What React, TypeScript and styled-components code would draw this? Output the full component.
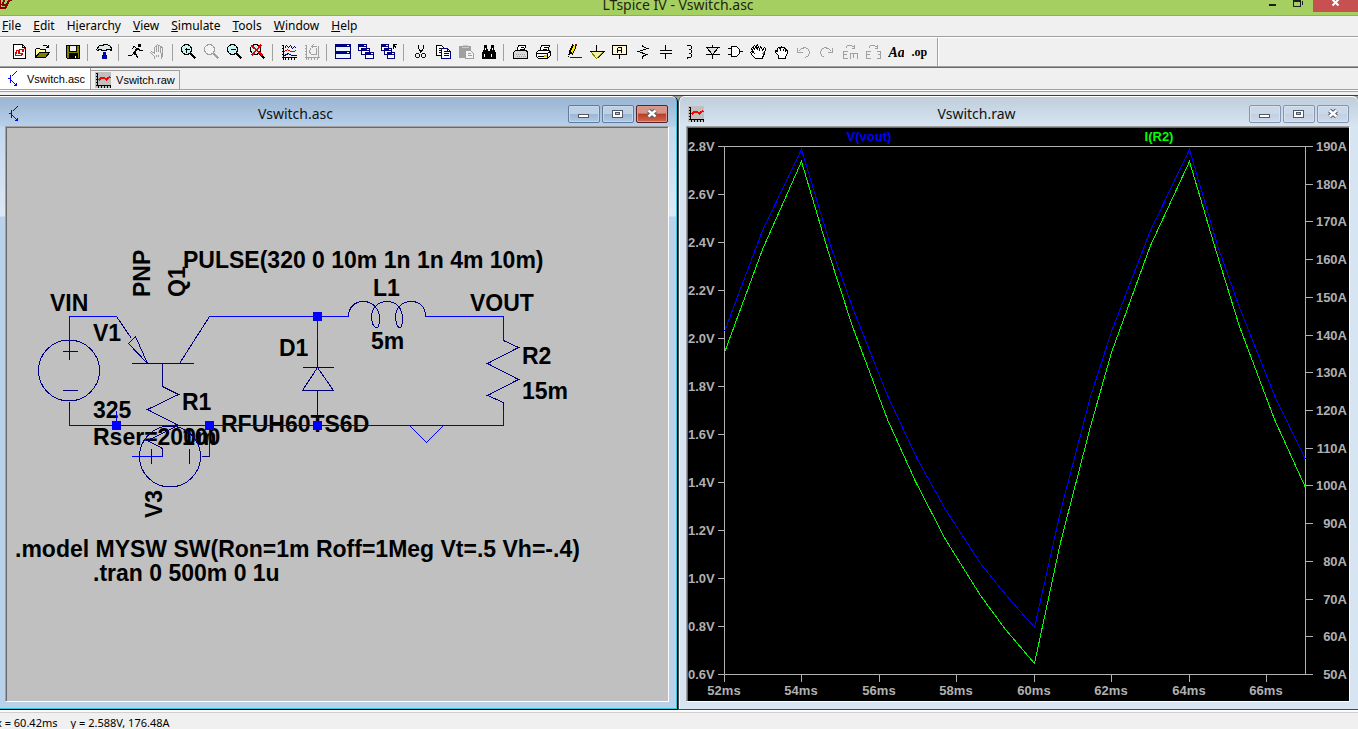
import React from "react";
import styled, { createGlobalStyle } from "styled-components";

const GlobalStyle = createGlobalStyle`
  * { box-sizing: border-box; }
  body { margin: 0; background: #f0f0f0; color: #000; font-family: "Open Sans", "Noto Sans", sans-serif; font-size: 12px; }
  button { font: inherit; color: inherit; padding: 0; margin: 0; }
`;

const uiFont = `"Noto Sans", "Open Sans", sans-serif`;

const Frame = styled.div`
  display: flex;
  flex-direction: column;
  height: 100vh;
  overflow: hidden;
`;

const TitleBar = styled.header`
  display: flex;
  align-items: flex-end;
  height: 16px;
  flex: none;
  overflow: hidden;
  background: #a6cf62;
  border-bottom: 1px solid #8db44c;
`;

const AppTitle = styled.h1`
  flex: 1;
  margin: 0 0 0 84px;
  text-align: center;
  font: 400 14px/20px ${uiFont};
  color: #1e2410;
`;

const FrameButtons = styled.div`
  display: flex;
  align-self: flex-start;
`;

const FrameButton = styled.button<{ $close?: boolean; $wide?: number }>`
  display: flex;
  width: ${(p) => p.$wide ?? 27}px;
  height: ${(p) => (p.$close ? 12 : 15)}px;
  border: 0;
  background: ${(p) => (p.$close ? "#c75050" : "transparent")};
`;

const MenuBar = styled.nav`
  display: flex;
  gap: 12px;
  height: 20px;
  padding-left: 2px;
  flex: none;
`;

const MenuItem = styled.button`
  border: 0;
  background: none;
  font: 400 12px/20px ${uiFont};
  white-space: nowrap;
`;

const ToolArea = styled.div`
  display: flex;
  flex: none;
  height: 32px;
  border-top: 1px solid #a0a0a0;
  border-bottom: 1px solid #696969;
  box-shadow: inset 0 1px #fff, inset 0 -1px #a0a0a0;
`;

const ToolBar = styled.div`
  display: flex;
  align-items: center;
  height: 28px;
  margin-top: 1px;
  padding: 0 7px;
  border-right: 1px solid #a0a0a0;
  box-shadow: 1px 0 #fff;
`;

const ToolButton = styled.button`
  display: flex;
  align-items: center;
  justify-content: center;
  width: 23px;
  height: 22px;
  border: 0;
  background: none;
`;

const Divider = styled.span`
  width: 8px;
  height: 17px;
  background: linear-gradient(#a0a0a0, #a0a0a0) 3px 0 / 1px 100% no-repeat;
`;

const TabStrip = styled.div`
  display: flex;
  align-items: flex-end;
  height: 22px;
  flex: none;
  border-bottom: 1px solid #a0a0a0;
`;

const Tab = styled.button<{ $active?: boolean }>`
  display: flex;
  align-items: center;
  gap: 5px;
  height: ${(p) => (p.$active ? 21 : 19)}px;
  padding: ${(p) => (p.$active ? "0 5px 0 6px" : "0 4px 0 4px")};
  border: 1px solid #a0a0a0;
  border-width: ${(p) => (p.$active ? "0 1px 0 0" : "1px 1px 0 0")};
  background: ${(p) => (p.$active ? "#fff" : "#f0f0f0")};
  font: 400 11px/18px "Liberation Sans", Arial, sans-serif;
`;

const TabShelf = styled.div`
  height: 5px;
  flex: none;
  background: linear-gradient(#fff 0 1px, #a0a0a0 1px 2px, #f0f0f0 2px);
`;

const Workspace = styled.main`
  display: grid;
  grid-template-columns: 339fr 340fr;
  flex: 1;
  min-height: 0;
  border-top: 1px solid #3c3c3c;
  background: #a0a0a0;
`;

const Child = styled.section<{ $active?: boolean }>`
  display: flex;
  flex-direction: column;
  min-width: 0;
  min-height: 0;
  padding: 1px 8px 7px ${(p) => (p.$active ? 5 : 7)}px;
  border: solid ${(p) => (p.$active ? "#000" : "#4a4a50")};
  border-width: ${(p) => (p.$active ? "0 1px 1px 0" : "0 0 1px 1px")};
  border-radius: ${(p) => (p.$active ? "0 6px 0 0" : "6px 6px 0 0")};
  box-shadow: inset ${(p) => (p.$active ? "-1px -1px #35c8dc" : "1px 0 #f4f8fc")}, inset 0 1px #fff;
  background: ${(p) =>
    p.$active
      ? "linear-gradient(#99b4d1 0, #b7cfe9 30px, #c3d8ee 31px, #dce8f5 120px, #b9d1ea 121px)"
      : "linear-gradient(#bfcddb 0, #d7e4f2 30px)"};
`;

const ChildTitle = styled.header`
  display: flex;
  align-items: center;
  height: 29px;
  padding: 4px 1px 0 2px;
  flex: none;
`;

const ChildName = styled.h2`
  flex: 1;
  margin: 0;
  text-align: center;
  font: 400 14px/20px ${uiFont};
  color: #111;
`;

const ChildButtons = styled.div`
  display: flex;
  gap: 2px;
`;

const ChildButton = styled.button<{ $tone: "blue" | "red" | "pale" }>`
  display: flex;
  width: 32px;
  height: 18px;
  border: 1px solid ${(p) => ({ blue: "#5f7ba0", red: "#5a2024", pale: "#8494b2" })[p.$tone]};
  border-radius: 2px;
  box-shadow: inset 0 0 0 1px ${(p) => ({ blue: "#c6d8ec", red: "#dc9a8e", pale: "#d6e2f0" })[p.$tone]};
  background: ${(p) =>
    ({
      blue: "linear-gradient(#bdd0e6 50%, #9ab6d4 50%, #b2cbe4)",
      red: "linear-gradient(#d69488 45%, #b83c26 50%, #cc6a50)",
      pale: "linear-gradient(#cbd8e7 50%, #c1cfe0 50%, #ccdaea)",
    })[p.$tone]};
`;

const Client = styled.div<{ $dark?: boolean }>`
  flex: 1;
  min-height: 0;
  overflow: hidden;
  border: 1px solid;
  border-color: #a0a0a0 #fff #fff #a0a0a0;
  box-shadow: inset 1px 1px #696969;
  padding: 1px 0 0 1px;
  background: ${(p) => (p.$dark ? "#000" : "#c0c0c0")};
`;

const Drawing = styled.svg`
  display: block;
  width: 100%;
  height: auto;
`;

const StatusBar = styled.footer`
  display: flex;
  gap: 13px;
  height: 19px;
  flex: none;
  margin-left: -4px;
  padding-top: 2px;
  border-top: 2px solid #fafafa;
  box-shadow: inset 0 1px #cfcfcf;
  font: 400 11px/18px ${uiFont};
  white-space: pre;
`;

const Glyph = styled.svg`
  display: block;
  flex: none;
`;

function Icon({ children, w = 16, h = 16 }: { children: React.ReactNode; w?: number; h?: number }) {
  return (
    <Glyph width={w} height={h} viewBox={`0 0 ${w} ${h}`} fill="none" stroke="#000" shapeRendering="crispEdges" aria-hidden>
      <g transform="translate(.5 .5)">{children}</g>
    </Glyph>
  );
}

const GREY = "#a0a0a0";
const NAVY = "#000080";

const lens = (c: string, fill: string) => (
  <>
    <circle cx="5" cy="5" r="5" stroke={c} fill={fill} />
    <path d="M9 9L14 14" stroke={c} strokeWidth="2.4" />
  </>
);

const miniWindow = (x: number, y: number, w = 8, h = 7) => (
  <>
    <rect x={x} y={y} width={w} height={h} fill="#fff" stroke={NAVY} />
    <path d={`M${x} ${y + 1}H${x + w}M${x} ${y + 2}H${x + w}`} stroke={NAVY} />
    <path d={`M${x + w - 3} ${y + 1}H${x + w - 1}`} stroke="#fff" />
  </>
);

const axes = (c: string) => (
  <path d="M2 0V15M0 1H2M0 4H2M0 7H2M0 10H2M0 13H15M4 13V15M7 13V15M10 13V15M13 13V15" stroke={c} />
);

const icons: Record<string, React.ReactNode> = {
  New: (
    <>
      <path d="M2 0H11L14 3V14H2Z" fill="#fff" />
      <path d="M11 0V3H14" />
      <path d="M5 6H8L7 9H11L10 11H4ZM7 5H12L11 8M12 5L13 4M4 11L3 12" stroke="#e00000" strokeWidth="1.4" />
    </>
  ),
  Open: (
    <>
      <path d="M1 12V5L2 4H5L6 5H11V8" fill="#ffff9c" />
      <path d="M1 13L5 8H15L11 13Z" fill="#808000" />
      <path d="M8 2L9 1H12L14 3M14 0V3H11" />
    </>
  ),
  Save: (
    <>
      <path d="M1 1H14V14H2L1 13Z" fill="#808000" />
      <rect x="4" y="1" width="7" height="6" fill="#f0f0f0" />
      <rect x="4" y="9" width="8" height="5" fill="#000" />
      <path d="M10 11V13" stroke="#fff" />
    </>
  ),
  "Control Panel": (
    <>
      <path d="M0 5L3 1H6L8 0H11L14 2L15 4V6L13 5H10V6H5V5H3L1 6Z" fill="#dce8e8" />
      <path d="M7 7V14M8 7V14M9 7V14" stroke="#0000c8" />
      <path d="M6 10V14M10 10V14" stroke={NAVY} />
    </>
  ),
  Run: (
    <>
      <rect x="11" y="0" width="2" height="2" fill="#000" />
      <path d="M5 2H7L9 4M9 4L6 9M10 4L7 9M6 9L9 10L10 14M6 9L4 11H0M11 4L12 6H15M6 3L4 5" strokeWidth="1.3" />
    </>
  ),
  Halt: (
    <path d="M4 14V12L0 8L1 7L4 9V3L5 2L6 3V7M6 3V1L7 0L8 1V7M8 2L9 1L10 2V7M10 3L11 2L12 4V11L11 14ZM6 10V12M8 10V12" stroke={GREY} />
  ),
  "Zoom area": (
    <>
      {lens("#000", "#c8f4f4")}
      <path d="M3 5H8M5 3V8" />
    </>
  ),
  Pan: lens(GREY, "#f4f4f4"),
  "Zoom back": (
    <>
      {lens("#000", "#c8f4f4")}
      <path d="M3 5H8" />
    </>
  ),
  "Zoom full": (
    <>
      {lens("#000", "#c8f4f4")}
      <path d="M1 1L12 11M11 0L1 11" stroke="#e80000" strokeWidth="1.8" />
    </>
  ),
  "Pick visible traces": (
    <>
      {axes("#000")}
      <path d="M3 4L5 1L7 3L9 1L11 4L13 2L15 4" stroke={NAVY} />
      <path d="M3 7L6 5L9 7H12L15 6" stroke="#e00000" />
      <path d="M3 11L7 9L10 11H15" stroke={NAVY} />
    </>
  ),
  "Autorange": (
    <>
      {axes(GREY)}
      <path d="M7 2H12M6 4L5 7L6 9L7 10H12M9 0L7 2L9 4M14 1V12M12 3V10" stroke={GREY} />
    </>
  ),
  "Tile windows": (
    <>
      <rect x="0" y="0" width="15" height="7" fill="#e8f4ff" stroke={NAVY} />
      <rect x="0" y="7" width="15" height="7" fill="#e8f4ff" stroke={NAVY} />
      <path d="M0 1H15M0 2H15M0 8H15M0 9H15" stroke={NAVY} />
      <path d="M11 1H13M11 8H13" stroke="#fff" />
    </>
  ),
  "Cascade windows": (
    <>
      {miniWindow(0, 0, 8, 6)}
      {miniWindow(3, 4, 8, 6)}
      {miniWindow(7, 8, 8, 6)}
    </>
  ),
  "Close all": (
    <>
      {miniWindow(0, 0, 7, 6)}
      {miniWindow(3, 4, 7, 6)}
      {miniWindow(6, 8, 7, 6)}
      <path d="M12 0H15M12 0V4M12 0L15 4" />
    </>
  ),
  Cut: (
    <>
      <path d="M6 0V4L9 9M11 0V4L7 9M8 5V7" />
      <circle cx="5" cy="11" r="2" stroke={NAVY} />
      <circle cx="11" cy="11" r="2" stroke={NAVY} />
    </>
  ),
  Copy: (
    <>
      <path d="M1 1H6L9 4V11H1Z" fill="#fff" />
      <path d="M3 4H5M3 6H7M3 8H7" />
      <path d="M6 4H12L15 7V14H6Z" fill="#fff" stroke={NAVY} />
      <path d="M8 7H11M8 9H13M8 11H13M12 4V7H15" stroke={NAVY} />
    </>
  ),
  Paste: (
    <>
      <path d="M1 2H12V13H1Z" fill={GREY} stroke={GREY} />
      <path d="M4 1H9M3 3H10" stroke="#c8c8c8" />
      <path d="M7 6H12L15 9V14H7Z" fill="#f4f4f4" stroke={GREY} />
      <path d="M9 9H12M9 11H13" stroke={GREY} />
    </>
  ),
  Find: (
    <>
      <path d="M3 1H5V4L7 7V14H1V9L3 4ZM10 1H12V4L14 9V14H8V7L10 4Z" fill="#000" />
      <path d="M3 9V12M10 9V12M4 3V5M11 3V5" stroke="#fff" />
    </>
  ),
  "Print setup": (
    <>
      <path d="M4 7L6 1H13L12 7" fill="#fff" />
      <path d="M8 3H11M7 5H11" />
      <path d="M1 8L3 6H14L15 8V14H1Z" fill="#d8d8d8" />
      <path d="M3 10H13M4 12H13" stroke={GREY} strokeDasharray="1 1" />
    </>
  ),
  Print: (
    <>
      <path d="M4 7L6 1H14L12 7" fill="#fff" />
      <path d="M8 3H12M7 5H11" />
      <path d="M1 8L3 6H14L15 8V11L12 14H3L1 12Z" fill="#fff" />
      <path d="M1 9H12L15 7M2 12H12M12 9V14" />
      <path d="M8 11H11" stroke="#d8c800" strokeWidth="2" />
    </>
  ),
  Wire: (
    <>
      <path d="M8 1L4 9" stroke="#000" strokeWidth="4.5" />
      <path d="M8 2L5 8" stroke="#ffe800" strokeWidth="2" />
      <path d="M8 0H10" stroke="#a00000" strokeWidth="2" />
      <path d="M2 11L3 9M1 12H2" />
      <path d="M3 13H15" stroke="#0000ff" />
    </>
  ),
  Ground: (
    <>
      <path d="M7 0V7" />
      <path d="M1 7H14L7 14Z" fill="#f4f4a0" stroke="#808000" />
      <path d="M0 7H15L8 14" />
    </>
  ),
  "Label net": (
    <>
      <rect x="0" y="1" width="14" height="9" rx="1" fill="#fff8d0" />
      <path d="M7 10V14M5 8V4L6 3H9V8M5 6H9" />
    </>
  ),
  Resistor: <path d="M7 0V2L12 4L3 7L11 10L7 12V14" />,
  Capacitor: <path d="M7 0V6M1 6H13M1 9H13M7 9V14" />,
  Inductor: <path d="M6 0V1H9L10 2V4L9 5H7M9 5L10 6V8L9 9H7M9 9L10 10V12L9 13H6V14" />,
  Diode: (
    <>
      <path d="M8 0V3M2 3H14L8 10ZM1 10H15M8 10V14" fill="#e0e0e0" />
      <path d="M1 3H15" />
    </>
  ),
  Component: (
    <>
      <path d="M4 2H9L12 5V9L9 12H4Z" fill="#fff" />
      <path d="M0 4H4M0 10H4M12 7H15" />
    </>
  ),
  Move: (
    <>
      <path d="M5 14L2 11L0 8L1 7L3 8L1 4L2 3L4 5L3 2L4 1L7 5L6 1L7 0L9 5L10 2L11 3L12 6L14 3L15 4L14 9L12 13V14Z" fill="#fff" />
      <path d="M13 8L12 10" stroke="#00b0b0" />
    </>
  ),
  Drag: <path d="M5 14V11L2 8V6L4 7V4L5 3L7 4L8 2L9 3L10 3L12 4V5L14 6V9L12 12V14ZM7 4V6M10 4V6M12 5V7" fill="#fff" />,
  Undo: <path d="M1 3V8H6M2 7L5 4L9 3L12 5L13 8L12 11L9 13" stroke={GREY} />,
  Redo: <path d="M13 3V8H8M12 7L9 4L5 3L2 5L1 8L2 11L5 13" stroke={GREY} />,
  Rotate: (
    <>
      <path d="M5 7H1V14H5M1 10H4M8 14V9H15V14M11 9V13" stroke={GREY} />
      <path d="M3 4L5 1H9L12 3M12 0V4H9" stroke={GREY} />
    </>
  ),
  Mirror: (
    <>
      <path d="M5 7H1V14H5M1 10H4M11 7H15V14H11M15 10H12" stroke={GREY} />
      <path d="M3 4L5 1H9L12 3M12 0V4H9" stroke={GREY} />
    </>
  ),
  Text: (
    <text x="0" y="12" fill="#000" stroke="none" fontFamily="Liberation Serif, serif" fontSize="14" fontWeight="700" fontStyle="italic">
      Aa
    </text>
  ),
  "SPICE directive": (
    <text x="0" y="11" fill="#000" stroke="none" fontFamily="Liberation Serif, serif" fontSize="12" fontWeight="700">
      .op
    </text>
  ),
};

const toolGroups = [
  ["New", "Open"],
  ["Save"],
  ["Control Panel"],
  ["Run", "Halt"],
  ["Zoom area", "Pan", "Zoom back", "Zoom full"],
  ["Pick visible traces", "Autorange"],
  ["Tile windows", "Cascade windows", "Close all"],
  ["Cut", "Copy", "Paste", "Find"],
  ["Print setup", "Print"],
  [
    "Wire", "Ground", "Label net", "Resistor", "Capacitor", "Inductor", "Diode", "Component",
    "Move", "Drag", "Undo", "Redo", "Rotate", "Mirror", "Text", "SPICE directive",
  ],
];

const menus: [string, string, string][] = [
  ["", "F", "ile"],
  ["", "E", "dit"],
  ["H", "i", "erarchy"],
  ["", "V", "iew"],
  ["", "S", "imulate"],
  ["", "T", "ools"],
  ["", "W", "indow"],
  ["", "H", "elp"],
];

const SchematicIcon = () => (
  <Icon>
    <path d="M1 7H4M4 3V11M5 5L10 0M5 9L10 14M10 11V14H7M8 13H10M9 12V13" stroke="#0000ff" />
  </Icon>
);

const WaveIcon = () => (
  <Icon>
    <rect x="0" y="0" width="15" height="15" fill="#c0c0c0" stroke="#c0c0c0" />
    <path d="M2 0V13M0 1H2M0 4H2M0 7H2M0 10H2M0 13H15M3 13V15M6 13V15M9 13V15M12 13V15M15 13V15" />
    <path d="M3 8L6 5L8 5L11 7L15 4" stroke="#ff0000" strokeWidth="2" />
  </Icon>
);

function CaptionButtons({ active }: { active?: boolean }) {
  const tone = active ? "blue" : "pale";
  return (
    <ChildButtons>
      <ChildButton $tone={tone} aria-label="Minimize">
        <Icon w={30} h={16}>
          <rect x="9" y="8" width="10" height="3" rx="1" fill="#fff" stroke="#535666" />
        </Icon>
      </ChildButton>
      <ChildButton $tone={tone} aria-label="Maximize">
        <Icon w={30} h={16}>
          <rect x="9" y="4" width="10" height="7" fill="#fff" stroke="#535666" />
          <rect x="12" y="6" width="4" height="2" fill="#a8c0dc" stroke="#535666" />
        </Icon>
      </ChildButton>
      <ChildButton $tone={active ? "red" : "pale"} aria-label="Close">
        <Icon w={30} h={16}>
          <g shapeRendering="auto">
            <path d="M11 4L18 10M18 4L11 10" stroke="#535666" strokeWidth="4.4" />
            <path d="M11 4L18 10M18 4L11 10" stroke="#fff" strokeWidth="2.4" />
          </g>
        </Icon>
      </ChildButton>
    </ChildButtons>
  );
}

const SchematicText = styled.text`
  font: 700 23px "Liberation Sans", Arial, sans-serif;
  fill: #000;
  stroke: none;
`;

const labels: [number, number, string][] = [
  [183, 268, "PULSE(320 0 10m 1n 1n 4m 10m)"],
  [50, 311, "VIN"],
  [93, 341, "V1"],
  [93, 418, "325"],
  [93, 445, "Rser=200m"],
  [182, 445, "100"],
  [182, 410, "R1"],
  [279, 356, "D1"],
  [373, 296, "L1"],
  [371, 349, "5m"],
  [470, 311, "VOUT"],
  [522, 364, "R2"],
  [522, 399, "15m"],
  [221, 432, "RFUH60TS6D"],
  [15, 557, ".model MYSW SW(Ron=1m Roff=1Meg Vt=.5 Vh=-.4)"],
  [93, 581, ".tran 0 500m 0 1u"],
];

const uprightLabels: [number, number, string][] = [
  [150, 297, "PNP"],
  [185, 297, "Q1"],
  [162, 518, "V3"],
];

const junctions: [number, number][] = [[317, 316], [317, 425], [116, 425], [209, 425]];

function Schematic() {
  return (
    <Drawing viewBox="7 128 661 572" fill="none" shapeRendering="crispEdges" role="img" aria-label="Schematic">
      {labels.map(([x, y, t]) => (
        <SchematicText key={t} x={x} y={y}>{t}</SchematicText>
      ))}
      {uprightLabels.map(([x, y, t]) => (
        <SchematicText key={t} transform={`translate(${x} ${y}) rotate(-90)`}>{t}</SchematicText>
      ))}
      <g transform="translate(.5 .5)">
        <g stroke={NAVY}>
          <circle cx="68.5" cy="370" r="30.5" />
          <path d="M62 351H77M69 323V359M62 390H77M69 401V409" />
          <path d="M116 316L131 338M135 336L128 343L147 363ZM131 363H193M209 316L179 363" />
          <path d="M162 363V386L178 394L147 409L178 425L147 440L162 448V456" />
          <circle cx="169.5" cy="456" r="30.5" />
          <path d="M151 448V463M144 456H159M189 448V463M201 456H209" />
          <path d="M317 340V367M302 367H333M317 367L302 390H333ZM317 390V418" />
          <path d="M348 316C348 307 354 301 363 301C372 301 379 308 379 318C379 324 378 327 376 327C373 327 371 322 371 316C371 307 378 301 387 301C396 301 402 308 402 318C402 324 401 327 399 327C397 327 395 322 395 316C395 307 402 301 411 301C420 301 425 307 425 316" />
          <path d="M503 340L518 347L487 363L518 379L487 395L503 402V409" />
        </g>
        <g stroke="#0000ff">
          <path d="M69 340V316H116M209 316H348M425 316H503V340M317 316V340" />
          <path d="M69 409V425M503 409V425M116 410V425M209 425V456M131 456H162" />
          <path d="M409 425L426 442L443 425" />
        </g>
        <path d="M69 425H503" stroke="#0000d0" />
      </g>
      {junctions.map(([x, y]) => (
        <rect key={`${x}-${y}`} x={x - 4} y={y - 4} width="9" height="9" fill="#0000ff" />
      ))}
    </Drawing>
  );
}

const AxisText = styled.text<{ $color?: string }>`
  font: 700 13px "Liberation Sans", Arial, sans-serif;
  fill: ${(p) => p.$color ?? "#b0b0b0"};
`;

const plot = { left: 724, right: 1305, top: 146, bottom: 674 };
const volts = Array.from({ length: 12 }, (_, i) => (2.8 - i * 0.2).toFixed(1));
const amps = Array.from({ length: 15 }, (_, i) => 190 - i * 10);
const times = Array.from({ length: 8 }, (_, i) => 52 + i * 2);
const voltY = (i: number) => plot.top + i * 48;
const ampY = (i: number) => Math.round(plot.top + (i * 528) / 14);
const timeX = (i: number) => Math.round(plot.left + i * 77.45);

const vout =
  "724,331 762,230 801,149 830,245 852,307 887,395 917,459 945,509 980,563 1005,594 1034,627 1060,511 1090,396 1111,331 1150,230 1189,149 1217,245 1239,307 1274,395 1305,459";
const ir2 =
  "724,352 762,249 801,161 828,252 852,326 887,419 915,481 945,539 980,595 1005,629 1034,663 1060,542 1090,426 1111,352 1150,245 1189,161 1216,252 1239,326 1274,419 1305,487";

function Waveform() {
  return (
    <Drawing viewBox="688 128 661 572" fill="none" shapeRendering="crispEdges" role="img" aria-label="Waveform plot">
      <g transform="translate(.5 .5)" stroke="#b0b0b0">
        <rect x={plot.left} y={plot.top} width={plot.right - plot.left} height={plot.bottom - plot.top} />
        {volts.map((v, i) => <path key={v} d={`M717 ${voltY(i)}H724`} />)}
        {amps.map((a, i) => <path key={a} d={`M1305 ${ampY(i)}H1312`} />)}
        {times.map((t, i) => <path key={t} d={`M${timeX(i)} 674V681`} />)}
        <polyline points={vout} stroke="#0000ff" />
        <polyline points={ir2} stroke="#00ff00" />
      </g>
      {volts.map((v, i) => <AxisText key={v} x="688" y={voltY(i) + 5}>{v}V</AxisText>)}
      {amps.map((a, i) => <AxisText key={a} x="1347" y={ampY(i) + 5} textAnchor="end">{a}A</AxisText>)}
      {times.map((t, i) => <AxisText key={t} x={timeX(i)} y="695" textAnchor="middle">{t}ms</AxisText>)}
      <AxisText x="869" y="141" textAnchor="middle" $color="#0000ff">V(vout)</AxisText>
      <AxisText x="1159" y="141" textAnchor="middle" $color="#00ff00">I(R2)</AxisText>
    </Drawing>
  );
}

export default function App() {
  return (
    <Frame>
      <GlobalStyle />
      <TitleBar>
        <Icon w={12}>
          <path d="M-1 0V7L0 8H5L6 6L9 0M4 0L2 5L5 6M8 0H12" stroke="#8c0000" strokeWidth="2" />
        </Icon>
        <AppTitle>LTspice IV - Vswitch.asc</AppTitle>
        <FrameButtons>
          <FrameButton $wide={26} aria-label="Minimize">
            <Icon w={26} h={12}><path d="M8 4H15M8 5H15" stroke="#1e1e1e" /></Icon>
          </FrameButton>
          <FrameButton aria-label="Restore">
            <Icon w={27} h={12}>
              <path d="M7 0H14V6H7ZM7 1H14M16 0V4" stroke="#1e1e1e" />
            </Icon>
          </FrameButton>
          <FrameButton $close $wide={45} aria-label="Close">
            <Icon w={45} h={12}>
              <path d="M19 -1L25 5M25 -1L19 5" stroke="#fff" strokeWidth="2" shapeRendering="auto" />
            </Icon>
          </FrameButton>
        </FrameButtons>
      </TitleBar>
      <MenuBar>
        {menus.map(([a, k, b]) => (
          <MenuItem key={a + k + b}>{a}<u>{k}</u>{b}</MenuItem>
        ))}
      </MenuBar>
      <ToolArea>
        <ToolBar role="toolbar">
          {toolGroups.map((group, i) => (
            <React.Fragment key={i}>
              {i > 0 && <Divider />}
              {group.map((name) => (
                <ToolButton key={name} aria-label={name}><Icon>{icons[name]}</Icon></ToolButton>
              ))}
            </React.Fragment>
          ))}
        </ToolBar>
      </ToolArea>
      <TabStrip>
        <Tab $active><SchematicIcon />Vswitch.asc</Tab>
        <Tab><WaveIcon />Vswitch.raw</Tab>
      </TabStrip>
      <TabShelf />
      <Workspace>
        <Child $active>
          <ChildTitle>
            <SchematicIcon />
            <ChildName>Vswitch.asc</ChildName>
            <CaptionButtons active />
          </ChildTitle>
          <Client><Schematic /></Client>
        </Child>
        <Child>
          <ChildTitle>
            <WaveIcon />
            <ChildName>Vswitch.raw</ChildName>
            <CaptionButtons />
          </ChildTitle>
          <Client $dark><Waveform /></Client>
        </Child>
      </Workspace>
      <StatusBar>
        <span>x = 60.42ms</span>
        <span>y = 2.588V, 176.48A</span>
      </StatusBar>
    </Frame>
  );
}
